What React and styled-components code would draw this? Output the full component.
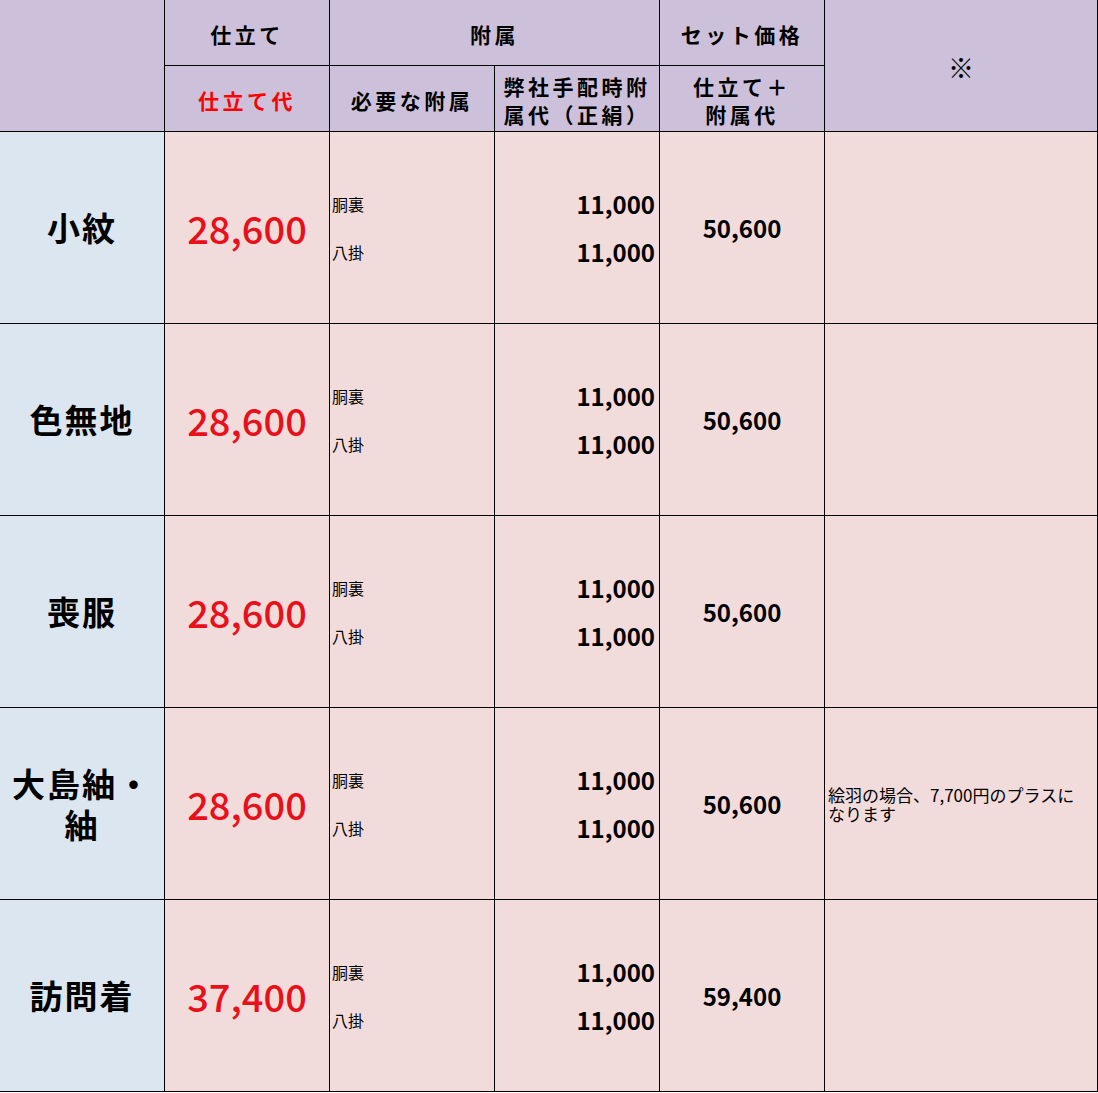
import styled, { createGlobalStyle } from "styled-components";

const GlobalStyle = createGlobalStyle`
  html, body {
    margin: 0;
    padding: 0;
    background: #ffffff;
  }
  body {
    font-family: "Noto Sans CJK JP", "Noto Sans", sans-serif;
    color: #000;
  }
`;

const rows = [
  { name: "小紋", price: "28,600", total: "50,600" },
  { name: "色無地", price: "28,600", total: "50,600" },
  { name: "喪服", price: "28,600", total: "50,600" },
  {
    name: "大島紬・\n紬",
    price: "28,600",
    total: "50,600",
    note: "絵羽の場合、7,700円のプラスに\nなります"
  },
  { name: "訪問着", price: "37,400", total: "59,400" }
];

const parts = [
  { label: "胴裏", cost: "11,000" },
  { label: "八掛", cost: "11,000" }
];

const App = () => {
  return (
    <>
      <GlobalStyle />
      <Table>
        <HeadCell rowSpan={2} />
        <HeadCell>仕立て</HeadCell>
        <HeadCell colSpan={2}>附属</HeadCell>
        <HeadCell>セット価格</HeadCell>
        <HeadCell rowSpan={2}>
          <Mark>※</Mark>
        </HeadCell>

        <HeadCell red>仕立て代</HeadCell>
        <HeadCell>必要な附属</HeadCell>
        <HeadCell>{"弊社手配時附\n属代（正絹）"}</HeadCell>
        <HeadCell>{"仕立て＋\n附属代"}</HeadCell>

        {rows.map((row, i) => (
          <Row key={i}>
            <NameCell>{row.name}</NameCell>
            <PriceCell>{row.price}</PriceCell>
            <StackCell align="flex-start">
              {parts.map((p) => (
                <PartLabel key={p.label}>{p.label}</PartLabel>
              ))}
            </StackCell>
            <StackCell align="flex-end">
              {parts.map((p) => (
                <PartCost key={p.label}>{p.cost}</PartCost>
              ))}
            </StackCell>
            <TotalCell>{row.total}</TotalCell>
            <NoteCell>{row.note && <NoteText>{row.note}</NoteText>}</NoteCell>
          </Row>
        ))}
      </Table>
    </>
  );
};

export default App;

const Table = styled.div`
  display: grid;
  grid-template-columns: 165px 165px 165px 165px 165px 273px;
  grid-template-rows: 66px 66px repeat(5, 192px);
  width: 1098px;
`;

const Row = styled.div`
  display: contents;
`;

const Cell = styled.div`
  box-sizing: border-box;
  border-right: 1px solid #000;
  border-bottom: 1px solid #000;
  background: #f2dcdb;
  display: flex;
  align-items: center;
  justify-content: center;
  min-width: 0;
`;

const HeadCell = styled(Cell)`
  background: #ccc0da;
  grid-row: ${({ rowSpan }) => (rowSpan ? `span ${rowSpan}` : "auto")};
  grid-column: ${({ colSpan }) => (colSpan ? `span ${colSpan}` : "auto")};
  padding-top: 3px;
  font-size: 21px;
  font-weight: 700;
  letter-spacing: 3.5px;
  line-height: 28px;
  text-align: center;
  white-space: pre-line;
  color: ${({ red }) => (red ? "#ff0000" : "#000")};
`;

const Mark = styled.span`
  font-size: 26px;
  font-weight: 400;
  letter-spacing: 0;
`;

const NameCell = styled(Cell)`
  background: #dce6f1;
  font-size: 33px;
  font-weight: 700;
  letter-spacing: 2px;
  line-height: 41px;
  text-align: center;
  white-space: pre-line;
`;

const PriceCell = styled(Cell)`
  font-size: 38px;
  font-weight: 500;
  color: #e8101a;
`;

const StackCell = styled(Cell)`
  flex-direction: column;
  align-items: ${({ align }) => align};
  gap: 24px;
  padding: 0 4px 0 2px;
`;

const PartLabel = styled.div`
  font-size: 16px;
  line-height: 24px;
`;

const PartCost = styled.div`
  font-size: 24px;
  font-weight: 700;
  line-height: 24px;
`;

const TotalCell = styled(Cell)`
  font-size: 24px;
  font-weight: 700;
`;

const NoteCell = styled(Cell)`
  justify-content: flex-start;
  padding: 0 3px;
`;

const NoteText = styled.div`
  font-size: 17px;
  line-height: 19px;
  white-space: pre;
`;
